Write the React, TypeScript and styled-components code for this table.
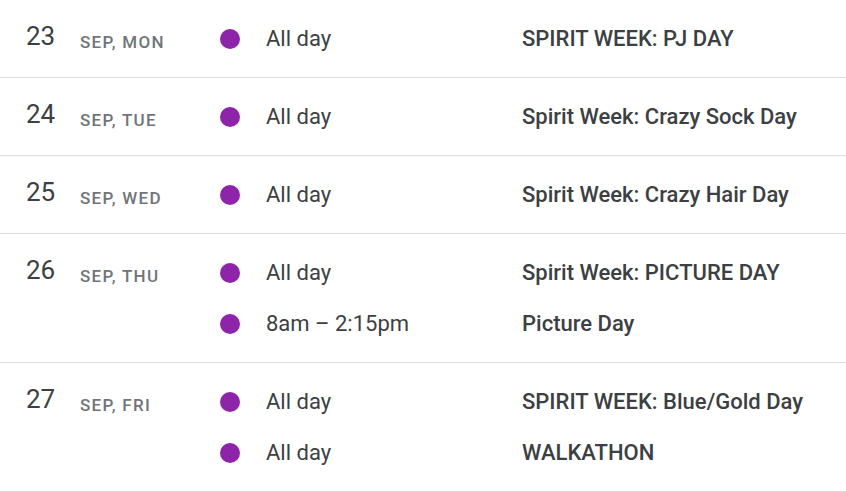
import React from "react";
import styled, { createGlobalStyle } from "styled-components";

const Global = createGlobalStyle`
  html, body { margin: 0; padding: 0; background: #fff; }
  body { font-family: Roboto, "Noto Sans", Arial, sans-serif; -webkit-font-smoothing: antialiased; }
`;

const List = styled.div`
  width: 846px;
  display: flex;
  flex-direction: column;
`;

const DayRow = styled.div`
  display: grid;
  grid-template-columns: 194px 46px 256px 1fr;
  grid-auto-rows: 51px;
  padding: 13px 0 13px 26px;
  border-bottom: 1px solid #dadce0;
  color: #3c4043;
`;

const DayCell = styled.div<{ $rows: number }>`
  grid-row: 1 / span ${(p) => p.$rows};
  display: flex;
  align-items: flex-start;
`;

const DayNum = styled.div`
  width: 54px;
  font-size: 26px;
  line-height: 46px;
  font-weight: 400;
  color: #3c4043;
`;

const DayLabel = styled.div`
  margin-top: 7px;
  font-size: 17px;
  line-height: 44px;
  font-weight: 500;
  letter-spacing: 1.3px;
  text-transform: uppercase;
  color: #70757a;
`;

const DotCell = styled.div`
  display: flex;
  align-items: center;
`;

const Dot = styled.span`
  display: block;
  width: 20px;
  height: 20px;
  border-radius: 50%;
  background: #8e24aa;
`;

const Time = styled.div`
  font-size: 22px;
  line-height: 51px;
  color: #3c4043;
  white-space: nowrap;
`;

const Title = styled.div`
  font-size: 22px;
  line-height: 51px;
  font-weight: 500;
  color: #3c4043;
  white-space: nowrap;
`;

type Ev = { time: string; title: string };
type Day = { num: string; label: string; events: Ev[] };

const days: Day[] = [
  { num: "23", label: "Sep, Mon", events: [{ time: "All day", title: "SPIRIT WEEK: PJ DAY" }] },
  { num: "24", label: "Sep, Tue", events: [{ time: "All day", title: "Spirit Week: Crazy Sock Day" }] },
  { num: "25", label: "Sep, Wed", events: [{ time: "All day", title: "Spirit Week: Crazy Hair Day" }] },
  {
    num: "26",
    label: "Sep, Thu",
    events: [
      { time: "All day", title: "Spirit Week: PICTURE DAY" },
      { time: "8am – 2:15pm", title: "Picture Day" },
    ],
  },
  {
    num: "27",
    label: "Sep, Fri",
    events: [
      { time: "All day", title: "SPIRIT WEEK: Blue/Gold Day" },
      { time: "All day", title: "WALKATHON" },
    ],
  },
];

export default function App() {
  return (
    <>
      <Global />
      <List>
        {days.map((d) => (
          <DayRow key={d.num}>
            <DayCell $rows={d.events.length}>
              <DayNum>{d.num}</DayNum>
              <DayLabel>{d.label}</DayLabel>
            </DayCell>
            {d.events.map((e, i) => (
              <React.Fragment key={i}>
                <DotCell>
                  <Dot />
                </DotCell>
                <Time>{e.time}</Time>
                <Title>{e.title}</Title>
              </React.Fragment>
            ))}
          </DayRow>
        ))}
      </List>
    </>
  );
}
